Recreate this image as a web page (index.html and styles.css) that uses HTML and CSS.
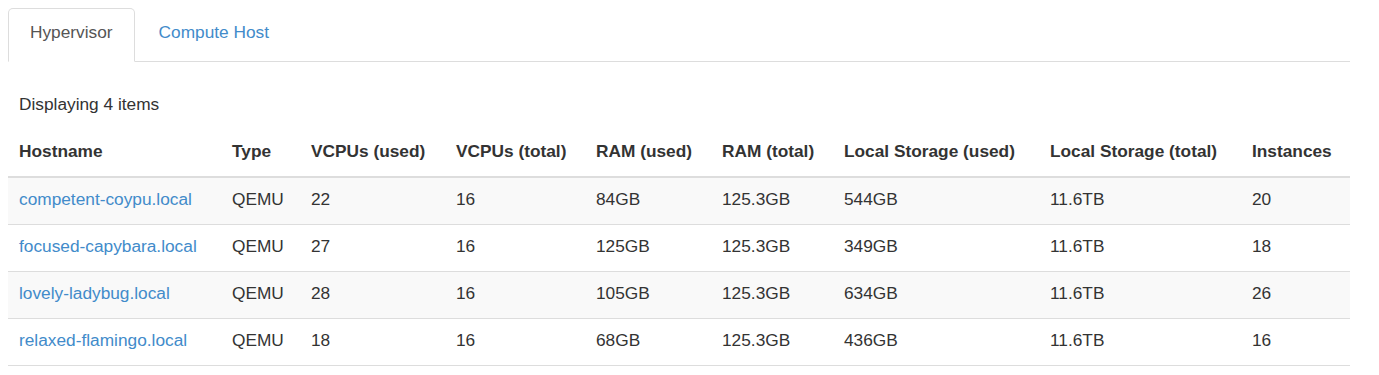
FILE: index.html
```html
<!DOCTYPE html>
<html>
<head>
<meta charset="utf-8">
<link rel="stylesheet" href="styles.css">
</head>
<body>
<div class="page">
  <ul class="tabs">
    <li class="tab active"><a href="#">Hypervisor</a></li>
    <li class="tab"><a href="#">Compute Host</a></li>
  </ul>
  <div class="count">Displaying 4 items</div>
  <table class="grid">
    <colgroup>
      <col class="c1"><col class="c2"><col class="c3"><col class="c4"><col class="c5"><col class="c6"><col class="c7"><col class="c8"><col class="c9">
    </colgroup>
    <thead>
      <tr>
        <th>Hostname</th><th>Type</th><th>VCPUs (used)</th><th>VCPUs (total)</th><th>RAM (used)</th><th>RAM (total)</th><th>Local Storage (used)</th><th>Local Storage (total)</th><th>Instances</th>
      </tr>
    </thead>
    <tbody>
      <tr class="odd">
        <td><a href="#">competent-coypu.local</a></td><td>QEMU</td><td>22</td><td>16</td><td>84GB</td><td>125.3GB</td><td>544GB</td><td>11.6TB</td><td>20</td>
      </tr>
      <tr>
        <td><a href="#">focused-capybara.local</a></td><td>QEMU</td><td>27</td><td>16</td><td>125GB</td><td>125.3GB</td><td>349GB</td><td>11.6TB</td><td>18</td>
      </tr>
      <tr class="odd">
        <td><a href="#">lovely-ladybug.local</a></td><td>QEMU</td><td>28</td><td>16</td><td>105GB</td><td>125.3GB</td><td>634GB</td><td>11.6TB</td><td>26</td>
      </tr>
      <tr>
        <td><a href="#">relaxed-flamingo.local</a></td><td>QEMU</td><td>18</td><td>16</td><td>68GB</td><td>125.3GB</td><td>436GB</td><td>11.6TB</td><td>16</td>
      </tr>
    </tbody>
  </table>
</div>
</body>
</html>
```
FILE: styles.css
```css
html, body {
  margin: 0;
  padding: 0;
  background: #fff;
}
body {
  padding: 8px;
  font-family: "Liberation Sans", Arial, Helvetica, sans-serif;
  font-size: 17.3px;
  line-height: 24px;
  color: #333;
}
.page {
  width: 1342px;
}
a {
  color: #428bca;
  text-decoration: none;
}
.tabs {
  display: flex;
  list-style: none;
  margin: 0;
  padding: 0;
  border-bottom: 1px solid #ddd;
}
.tab {
  margin-bottom: -1px;
  margin-right: 2px;
}
.tab a {
  display: block;
  padding: 11px 21px 17px;
  border: 1px solid transparent;
  border-radius: 5px 5px 0 0;
  color: #428bca;
}
.tab.active a {
  color: #555;
  background: #fff;
  border-color: #ddd #ddd transparent;
}
.count {
  margin-top: 30px;
  margin-bottom: 14px;
  padding-left: 11px;
}
.grid {
  width: 1342px;
  border-collapse: collapse;
  table-layout: fixed;
}
.c1 { width: 213px; }
.c2 { width: 79px; }
.c3 { width: 145px; }
.c4 { width: 140px; }
.c5 { width: 126px; }
.c6 { width: 122px; }
.c7 { width: 206px; }
.c8 { width: 202px; }
.c9 { width: 109px; }
.grid th,
.grid td {
  text-align: left;
  vertical-align: top;
  padding: 9px 11px 13px;
  white-space: nowrap;
}
.grid th {
  font-weight: bold;
  border-bottom: 2px solid #ddd;
}
.grid td {
  border-bottom: 1px solid #ddd;
}
.grid tr.odd td {
  background: #f9f9f9;
}
```
